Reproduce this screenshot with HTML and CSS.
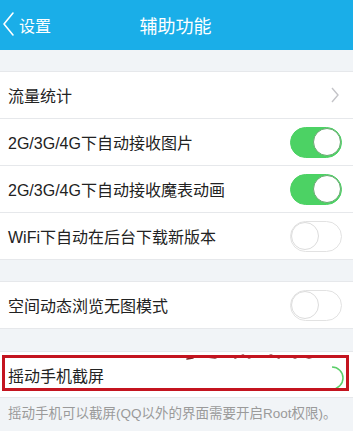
FILE: index.html
```html
<!DOCTYPE html>
<html>
<head>
<meta charset="utf-8">
<link rel="stylesheet" href="styles.css">
</head>
<body>
<div class="page">
  <header class="nav">
    <div class="back">
      <svg class="back-icon" width="14" height="26" viewBox="0 0 14 26"><polyline points="11,2 2,13 11,24" fill="none" stroke="#ffffff" stroke-width="1.6" stroke-linecap="round" stroke-linejoin="round"/></svg>
      <span>设置</span>
    </div>
    <div class="title">辅助功能</div>
  </header>

  <div class="gap g1"></div>
  <div class="group">
    <div class="row">
      <span class="label">流量统计</span>
      <svg class="chev" width="10" height="16" viewBox="0 0 10 16"><polyline points="2,1 8,8 2,15" fill="none" stroke="#c4c4c8" stroke-width="1.4"/></svg>
    </div>
    <div class="row">
      <span class="label">2G/3G/4G下自动接收图片</span>
      <span class="toggle on"><span class="knob"></span></span>
    </div>
    <div class="row">
      <span class="label">2G/3G/4G下自动接收魔表动画</span>
      <span class="toggle on"><span class="knob"></span></span>
    </div>
    <div class="row">
      <span class="label">WiFi下自动在后台下载新版本</span>
      <span class="toggle"><span class="knob"></span></span>
    </div>
  </div>

  <div class="gap g2"></div>
  <div class="group">
    <div class="row">
      <span class="label">空间动态浏览无图模式</span>
      <span class="toggle"><span class="knob"></span></span>
    </div>
  </div>

  <div class="gap g3"></div>
  <div class="group">
    <div class="row marked">
      <span class="label">摇动手机截屏</span>
      <svg class="scribble" width="140" height="12" viewBox="0 0 140 12"><path d="M2,7 L8,6 M22,5 L30,6 L36,4 M50,6 L58,3 L64,6 L70,4 M80,5 L86,3 L94,6 M104,4 L110,6 L116,4 L124,6 L132,4" fill="none" stroke="#7a2a2a" stroke-width="1.6" stroke-linecap="round"/></svg>
      <svg class="arc" width="14" height="24" viewBox="0 0 14 24"><path d="M2,1 A11,11 0 0 1 2,23" fill="none" stroke="#5ccf6a" stroke-width="1.5"/></svg>
      <div class="redbox"></div>
    </div>
  </div>
  <p class="desc">摇动手机可以截屏(QQ以外的界面需要开启Root权限)。</p>
</div>
</body>
</html>
```

FILE: styles.css
```css
* { box-sizing: border-box; }
html, body { margin: 0; padding: 0; }
body {
  background: #f1f4f7;
  font-family: "Liberation Sans", "Noto Sans CJK SC", sans-serif;
  width: 353px;
  height: 431px;
  overflow: hidden;
}
.page { width: 353px; }
.nav {
  height: 50px;
  background: #1aaee8;
  color: #ffffff;
  position: relative;
  display: flex;
  align-items: center;
  justify-content: center;
}
.back {
  position: absolute;
  left: 2px;
  top: 0;
  height: 50px;
  display: flex;
  align-items: center;
  gap: 3px;
  font-size: 16px;
}
.back-icon { display: block; margin-top: -2px; }
.title {
  font-size: 18px;
  margin-left: -2px;
}
.gap { background: #f1f4f7; }
.g1 { height: 21px; }
.g2 { height: 21px; }
.g3 { height: 22px; }
.group {
  background: #ffffff;
  border-top: 1px solid #e6e8eb;
}
.row {
  height: 47px;
  display: flex;
  align-items: center;
  justify-content: space-between;
  padding: 0 11px 0 8px;
  border-bottom: 1px solid #e6e8eb;
  position: relative;
}
.label {
  font-size: 16px;
  color: #222222;
}
.chev { margin-right: 2px; }
.toggle {
  width: 52px;
  height: 31px;
  border-radius: 16px;
  border: 1.5px solid #e2e2e2;
  background: #ffffff;
  position: relative;
  display: block;
}
.toggle .knob {
  position: absolute;
  top: 0;
  left: 0;
  width: 28px;
  height: 28px;
  border-radius: 50%;
  background: #ffffff;
  border: 1px solid #dcdcdc;
}
.toggle.on {
  background: #4cd264;
  border-color: #4cd264;
}
.toggle.on .knob {
  left: auto;
  right: 0;
  border-color: #6aa872;
}
.marked { height: 46px; }
.scribble {
  position: absolute;
  left: 185px;
  top: 0px;
}
.arc {
  position: absolute;
  left: 330px;
  top: 14px;
}
.redbox {
  position: absolute;
  left: 2px;
  top: 3px;
  width: 347px;
  height: 36px;
  border: 3px solid #c4141f;
}
.desc {
  margin: 0;
  padding: 4px 0 0 8px;
  font-size: 13.5px;
  color: #9a9a9a;
}
```
